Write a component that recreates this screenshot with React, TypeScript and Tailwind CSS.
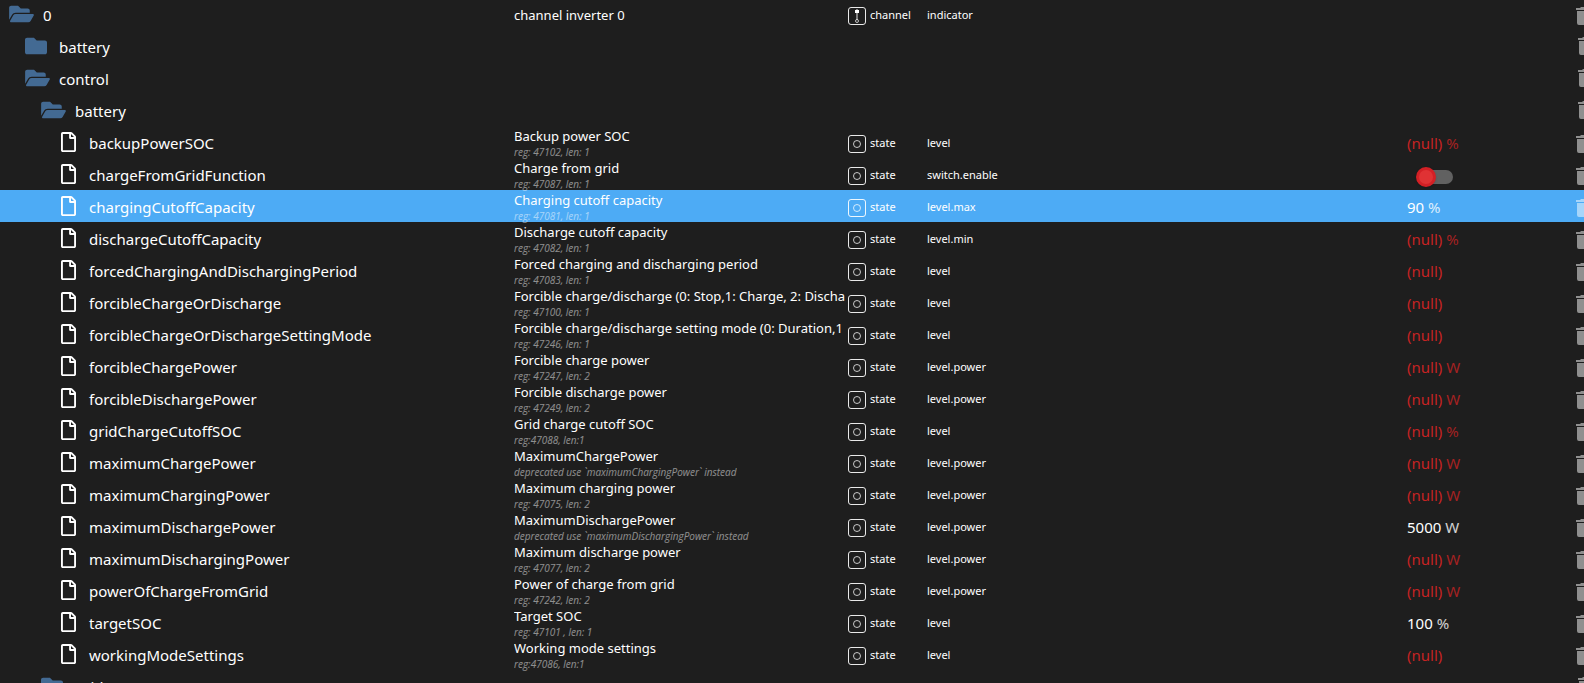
import React, { useState } from 'react';
import { FaFolder, FaFolderOpen, FaRegFile } from 'react-icons/fa';

interface TreeItem {
  name: string;
  level: number;
  kind: 'folder' | 'open' | 'file';
  title?: string;
  desc?: string;
  type?: 'state' | 'channel';
  role?: string;
  value?: string;
  unit?: string;
  toggle?: boolean;
}

const state = (name: string, title: string, desc: string, role: string, value?: string, unit?: string): TreeItem => ({
  name, level: 3, kind: 'file', title, desc, type: 'state', role, value, unit,
});

const ITEMS: TreeItem[] = [
  { name: '0', level: 0, kind: 'open', title: 'channel inverter 0', type: 'channel', role: 'indicator' },
  { name: 'battery', level: 1, kind: 'folder' },
  { name: 'control', level: 1, kind: 'open' },
  { name: 'battery', level: 2, kind: 'open' },
  state('backupPowerSOC', 'Backup power SOC', 'reg: 47102, len: 1', 'level', '(null)', '%'),
  { ...state('chargeFromGridFunction', 'Charge from grid', 'reg: 47087, len: 1', 'switch.enable'), toggle: true },
  state('chargingCutoffCapacity', 'Charging cutoff capacity', 'reg: 47081, len: 1', 'level.max', '90', '%'),
  state('dischargeCutoffCapacity', 'Discharge cutoff capacity', 'reg: 47082, len: 1', 'level.min', '(null)', '%'),
  state('forcedChargingAndDischargingPeriod', 'Forced charging and discharging period', 'reg: 47083, len: 1', 'level', '(null)'),
  state('forcibleChargeOrDischarge', 'Forcible charge/discharge (0: Stop,1: Charge, 2: Discha', 'reg: 47100, len: 1', 'level', '(null)'),
  state('forcibleChargeOrDischargeSettingMode', 'Forcible charge/discharge setting mode (0: Duration,1', 'reg: 47246, len: 1', 'level', '(null)'),
  state('forcibleChargePower', 'Forcible charge power', 'reg: 47247, len: 2', 'level.power', '(null)', 'W'),
  state('forcibleDischargePower', 'Forcible discharge power', 'reg: 47249, len: 2', 'level.power', '(null)', 'W'),
  state('gridChargeCutoffSOC', 'Grid charge cutoff SOC', 'reg:47088, len:1', 'level', '(null)', '%'),
  state('maximumChargePower', 'MaximumChargePower', 'deprecated use `maximumChargingPower` instead', 'level.power', '(null)', 'W'),
  state('maximumChargingPower', 'Maximum charging power', 'reg: 47075, len: 2', 'level.power', '(null)', 'W'),
  state('maximumDischargePower', 'MaximumDischargePower', 'deprecated use `maximumDischargingPower` instead', 'level.power', '5000', 'W'),
  state('maximumDischargingPower', 'Maximum discharge power', 'reg: 47077, len: 2', 'level.power', '(null)', 'W'),
  state('powerOfChargeFromGrid', 'Power of charge from grid', 'reg: 47242, len: 2', 'level.power', '(null)', 'W'),
  state('targetSOC', 'Target SOC', 'reg: 47101 , len: 1', 'level', '100', '%'),
  state('workingModeSettings', 'Working mode settings', 'reg:47086, len:1', 'level', '(null)'),
  { name: 'grid', level: 2, kind: 'folder' },
];

const INDENT = ['pl-[9px]', 'pl-[25px]', 'pl-[41px]', 'pl-[61px]'];

const NAME_GAP = { open: 'ml-[9px]', folder: 'ml-3', file: 'ml-[13px]' };

const ItemIcon: React.FC<{ kind: TreeItem['kind'] }> = ({ kind }) => {
  if (kind === 'open') return <FaFolderOpen className="h-[22px] w-[25px] shrink-0 text-[#436a93]" />;
  if (kind === 'folder') return <FaFolder className="h-[22px] w-[22px] shrink-0 text-[#436a93]" />;
  return <FaRegFile className="h-5 w-[15px] shrink-0" />;
};

const TypeIcon: React.FC<{ type: 'state' | 'channel' }> = ({ type }) => (
  <svg viewBox="0 0 18 18" className="mt-0.5 h-[18px] w-[18px] shrink-0" fill="none" stroke="currentColor">
    <rect x="0.5" y="0.5" width="17" height="17" rx="2.5" strokeOpacity="0.9" />
    {type === 'state' ? (
      <circle cx="9" cy="9" r="3.5" strokeOpacity="0.75" />
    ) : (
      <>
        <rect x="7" y="3" width="4" height="3" fill="currentColor" stroke="none" />
        <path d="M9 2v11" strokeWidth="1.5" strokeOpacity="0.6" />
        <circle cx="9" cy="14" r="1.5" strokeOpacity="0.7" />
      </>
    )}
  </svg>
);

const TrashIcon: React.FC = () => (
  <svg viewBox="0 0 14 18" className="h-[18px] w-[14px]" fill="currentColor">
    <path d="M1 16a2 2 0 0 0 2 2h8a2 2 0 0 0 2-2V4H1v12zM14 1h-4l-1-1H5L4 1H0v2h14V1z" />
  </svg>
);

const ToggleSwitch: React.FC<{ label: string }> = ({ label }) => {
  const [on, setOn] = useState(false);
  return (
    <label className="relative mt-1 ml-3 flex h-5 w-9 cursor-pointer items-center">
      <input type="checkbox" aria-label={label} checked={on} onChange={() => setOn(!on)} className="peer sr-only" />
      <span className="h-[14px] w-[34px] rounded-full bg-[#616161]" />
      <span className="absolute left-[-3px] h-5 w-5 rounded-full border-[3px] border-[#d32025] bg-[#e03234] shadow peer-checked:left-[17px]" />
    </label>
  );
};

const Row: React.FC<{ item: TreeItem; selected: boolean; onSelect: () => void }> = ({ item, selected, onSelect }) => {
  const isNull = item.value === '(null)';
  return (
    <div
      role="treeitem"
      aria-level={item.level + 1}
      aria-selected={selected}
      onClick={onSelect}
      className={`flex h-8 items-center whitespace-nowrap text-white ${selected ? 'bg-[#4dabf5]' : ''}`}
    >
      <div className={`flex w-[514px] shrink-0 items-center ${INDENT[item.level]}`}>
        <ItemIcon kind={item.kind} />
        <span className={`pt-0.5 text-[15px] leading-6 ${NAME_GAP[item.kind]}`}>{item.name}</span>
      </div>
      <div className="w-[334px] shrink-0 overflow-hidden pt-0.5">
        <div className="text-[13px] leading-[18px]">{item.title}</div>
        {item.desc && (
          <div className="font-['Open_Sans','Noto_Sans',sans-serif] text-[10px] leading-[14px] italic opacity-50">{item.desc}</div>
        )}
      </div>
      <div className="flex w-[79px] shrink-0 items-center gap-1 pt-0.5 text-[11px] leading-4">
        {item.type && <TypeIcon type={item.type} />}
        {item.type}
      </div>
      <div className="min-w-0 flex-1 pt-0.5 text-[11px] leading-4">{item.role}</div>
      <div className="w-[169px] shrink-0 pt-0.5">
        {item.toggle && <ToggleSwitch label={item.name} />}
        {item.value && (
          <div className={`text-[15px] leading-6 ${isNull ? 'text-[#c62323]' : ''}`}>
            {item.value}
            {item.unit && <span className="opacity-80"> {item.unit}</span>}
          </div>
        )}
      </div>
      <div className="flex w-2 shrink-0 overflow-hidden">
        <button
          type="button"
          aria-label={`Delete ${item.name}`}
          className={`shrink-0 text-white/50 ${item.type ? 'mt-1' : 'ml-0.5'}`}
        >
          <TrashIcon />
        </button>
      </div>
    </div>
  );
};

const App: React.FC = () => {
  const [selected, setSelected] = useState(6);

  return (
    <div className="h-screen overflow-hidden bg-[#1e1e1e] font-['Noto_Sans','Open_Sans',sans-serif]">
      <div role="tree" className="-mt-0.5">
        {ITEMS.map((item, i) => (
          <Row key={i} item={item} selected={i === selected} onSelect={() => setSelected(i)} />
        ))}
      </div>
    </div>
  );
};

export default App;
